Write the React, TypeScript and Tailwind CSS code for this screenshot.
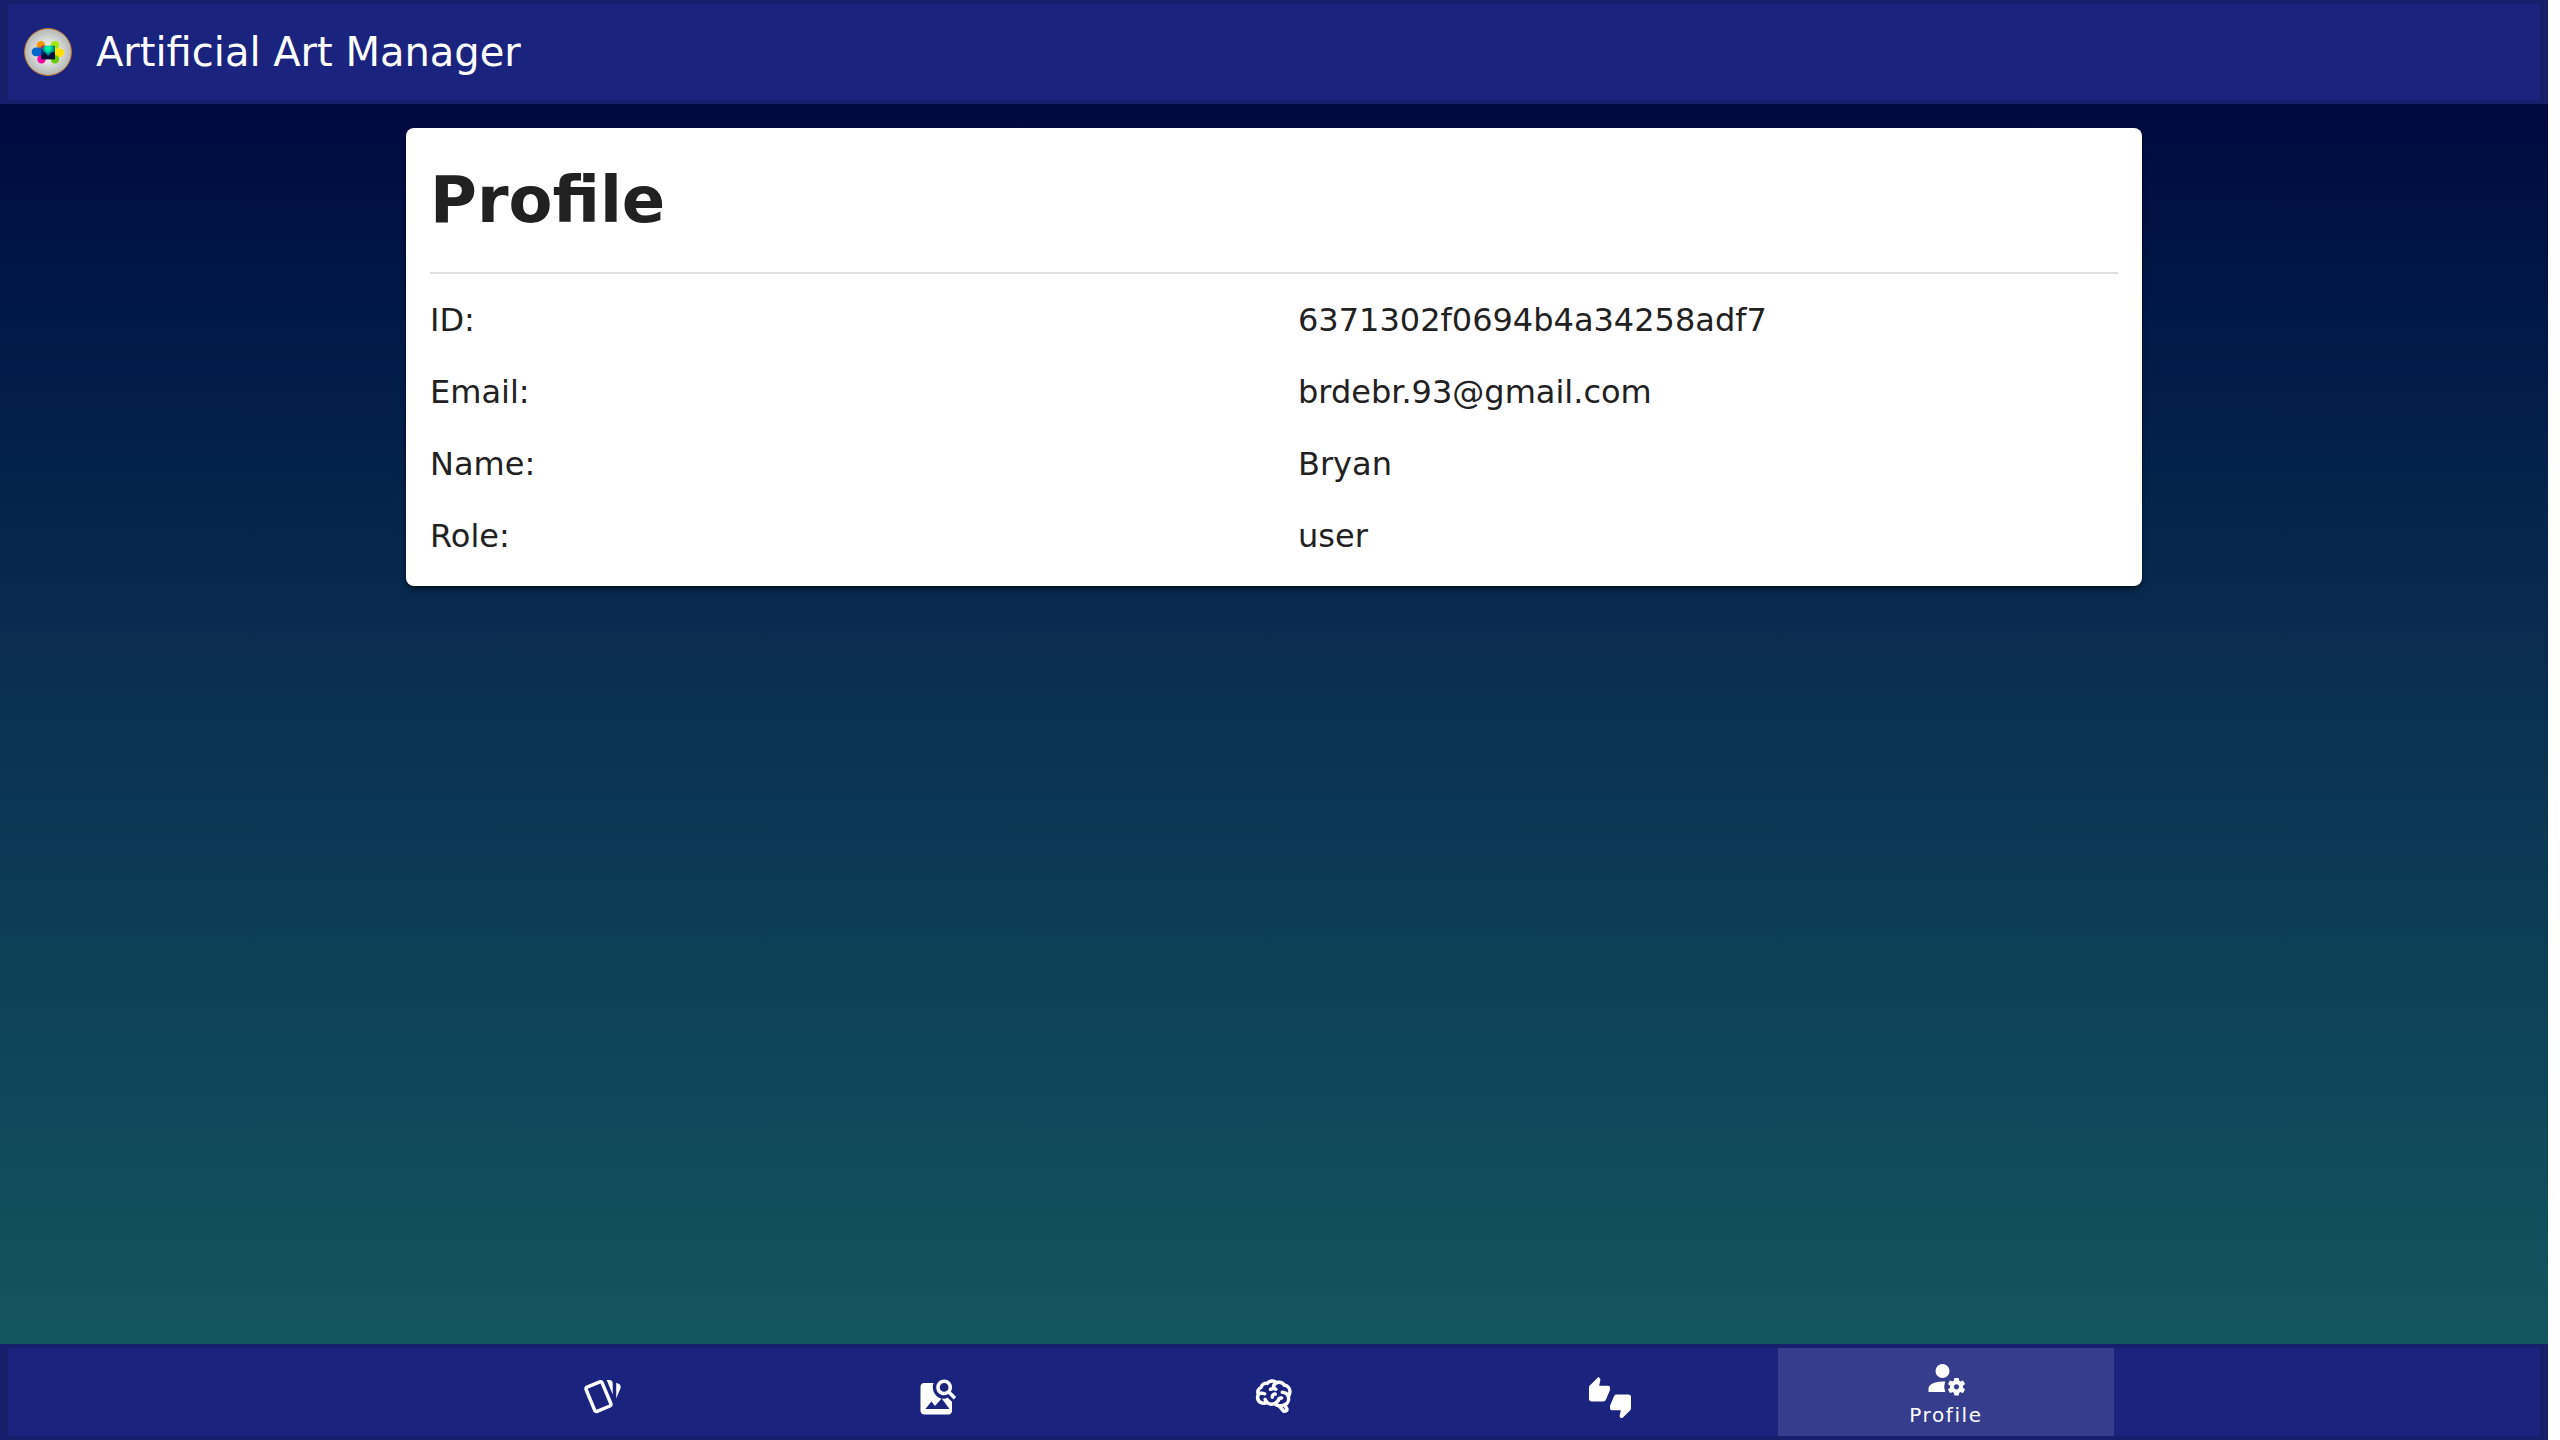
type NavItem = { label: string; path: string; active?: boolean };

const NAV_ITEMS: NavItem[] = [
  {
    label: "Cards",
    path: "M11.19,2.25C10.93,2.25 10.67,2.31 10.42,2.4L3.06,5.45C2.04,5.87 1.55,7.04 1.97,8.05L6.93,20C7.24,20.77 7.97,21.23 8.74,21.25C9,21.25 9.27,21.22 9.53,21.1L16.9,18.05C17.65,17.74 18.11,17 18.13,16.26C18.14,16 18.09,15.71 18,15.45L13,3.5C12.71,2.73 11.97,2.26 11.19,2.25M14.67,2.25L18.12,10.6V4.25A2,2 0 0,0 16.12,2.25M20.13,3.79V12.82L22.56,6.96C22.97,5.94 22.5,4.78 21.47,4.36M11.19,4.22L16.17,16.24L8.78,19.3L3.8,7.29",
  },
  {
    label: "Search images",
    path: "M15.5,9C16.2,9 16.79,8.76 17.27,8.27C17.76,7.79 18,7.2 18,6.5C18,5.83 17.76,5.23 17.27,4.73C16.79,4.23 16.2,4 15.5,4C14.83,4 14.23,4.23 13.73,4.73C13.23,5.23 13,5.83 13,6.5C13,7.2 13.23,7.79 13.73,8.27C14.23,8.76 14.83,9 15.5,9M19.31,8.91L22.41,12L21,13.41L17.86,10.31C17.08,10.78 16.28,11 15.47,11C14.22,11 13.16,10.58 12.3,9.7C11.45,8.83 11,7.77 11,6.5C11,5.27 11.45,4.2 12.33,3.33C13.2,2.45 14.27,2 15.5,2C16.77,2 17.83,2.45 18.7,3.33C19.58,4.2 20,5.27 20,6.5C20,7.33 19.78,8.13 19.31,8.91M16.5,18H5.5L8.25,14.5L10.22,17.1L14.1,12.8L18.6,18.8H4.7L5.5,18H16.5M17.4,12.3L20,14.7V20C20,20.55 19.81,21 19.41,21.4C19,21.79 18.53,22 18,22H4C3.45,22 3,21.79 2.6,21.4C2.21,21 2,20.55 2,20V6C2,5.47 2.21,5 2.6,4.59C3,4.19 3.45,4 4,4H9.5C9.2,4.64 9.03,5.31 9,6C9,8.2 9.64,9.77 10.9,11.1C12.1,12.4 13.66,13 15.5,13C16.2,13 16.8,12.7 17.4,12.3Z",
  },
  {
    label: "Brain",
    path: "M21.33,12.91C21.42,14.46 20.71,15.95 19.44,16.86L20.21,18.35C20.44,18.8 20.47,19.33 20.27,19.8C20.08,20.27 19.69,20.64 19.21,20.8L18.42,21.05C18.25,21.11 18.06,21.14 17.88,21.14C17.37,21.14 16.89,20.91 16.56,20.5L14.44,18C13.55,17.85 12.71,17.47 12,16.9C11.5,17.05 11,17.13 10.5,17.13C9.62,17.13 8.74,16.86 8,16.34C7.47,16.5 6.93,16.57 6.38,16.56C5.59,16.57 4.81,16.41 4.08,16.11C2.65,15.47 1.7,14.07 1.65,12.5C1.57,11.78 1.69,11.05 2,10.39C1.71,9.64 1.68,8.82 1.93,8.06C2.3,7.11 3,6.32 3.87,5.82C4.45,4.13 6.08,3 7.87,3.12C9.47,1.62 11.92,1.46 13.7,2.75C14.12,2.64 14.56,2.58 15,2.58C16.36,2.55 17.65,3.15 18.5,4.22C20.54,4.75 22,6.57 22.08,8.69C22.13,9.8 21.83,10.89 21.22,11.82C21.29,12.18 21.33,12.54 21.33,12.91M16.33,11.5C16.9,11.57 17.35,12 17.35,12.57A1,1 0 0,1 16.35,13.57H15.72C15.4,14.47 14.84,15.26 14.1,15.86C14.35,15.95 14.61,16 14.87,16.07C20,16 19.4,12.87 19.4,12.82C19.34,11.39 18.14,10.27 16.71,10.33A1,1 0 0,1 15.71,9.33A1,1 0 0,1 16.71,8.33C17.94,8.36 19.12,8.82 20.04,9.63C20.09,9.34 20.12,9.04 20.12,8.74C20.06,7.5 19.5,6.42 17.25,6.21C16,3.25 12.85,4.89 12.85,5.81V5.81C12.82,6.04 13.06,6.53 13.1,6.56A1,1 0 0,1 14.1,7.56C14.1,8.11 13.65,8.56 13.1,8.56V8.56C12.57,8.54 12.07,8.34 11.67,8C11.19,8.31 10.64,8.5 10.07,8.56V8.56C9.5,8.61 9.03,8.21 9,7.66C8.92,7.1 9.33,6.61 9.88,6.56C10.04,6.54 10.82,6.42 10.82,5.79V5.79C10.82,5.13 11.07,4.5 11.5,4C10.58,3.75 9.59,4.08 8.59,5.29C6.75,5 6,5.25 5.45,7.2C4.5,7.67 4,8 3.78,9C4.86,8.78 5.97,8.87 7,9.25C7.5,9.44 7.78,10 7.59,10.54C7.4,11.06 6.82,11.32 6.3,11.13C5.57,10.81 4.75,10.79 4,11.07C3.68,11.34 3.68,11.9 3.68,12.34C3.68,13.08 4.05,13.77 4.68,14.17C5.21,14.44 5.8,14.58 6.39,14.57C6.24,14.31 6.11,14.04 6,13.76C5.81,13.22 6.1,12.63 6.64,12.44C7.18,12.25 7.77,12.54 7.96,13.08C8.36,14.22 9.38,15 10.58,15.13C11.95,15.06 13.17,14.25 13.77,13C14,11.62 15.11,11.5 16.33,11.5M18.33,18.97L17.71,17.67L17,17.83L18,19.08L18.33,18.97M13.68,10.36C13.7,9.83 13.3,9.38 12.77,9.33C12.06,9.29 11.37,9.53 10.84,10C10.27,10.58 9.97,11.38 10,12.19A1,1 0 0,0 11,13.19C11.57,13.19 12,12.74 12,12.19C12,11.92 12.07,11.65 12.23,11.43C12.35,11.33 12.5,11.28 12.66,11.28C13.21,11.31 13.68,10.9 13.68,10.36Z",
  },
  {
    label: "Votes",
    path: "M22.5,10.5H15.75C15.13,10.5 14.6,10.88 14.37,11.41L12.11,16.7C12.04,16.87 12,17.06 12,17.25V18.5A1,1 0 0,0 13,19.5H18.18L17.5,22.68V22.92C17.5,23.23 17.63,23.5 17.83,23.72L18.62,24.5L23.56,19.56C23.83,19.29 24,18.91 24,18.5V12A1.5,1.5 0 0,0 22.5,10.5M12,6.5A1,1 0 0,0 11,5.5H5.82L6.5,2.32V2.09C6.5,1.78 6.37,1.5 6.17,1.29L5.38,0.5L0.44,5.44C0.17,5.71 0,6.09 0,6.5V13A1.5,1.5 0 0,0 1.5,14.5H8.25C8.87,14.5 9.4,14.12 9.63,13.59L11.89,8.3C11.96,8.13 12,7.94 12,7.75V6.5Z",
  },
  {
    label: "Profile",
    active: true,
    path: "M10 4A4 4 0 0 0 6 8A4 4 0 0 0 10 12A4 4 0 0 0 14 8A4 4 0 0 0 10 4M17 12C16.87 12 16.76 12.09 16.74 12.21L16.5 13.47C16.21 13.6 15.96 13.76 15.72 13.93L14.5 13.44C14.4 13.44 14.25 13.44 14.19 13.56L13.19 15.34C13.13 15.45 13.13 15.56 13.24 15.64L14.31 16.45C14.28 16.65 14.25 16.82 14.25 17C14.25 17.18 14.28 17.35 14.31 17.55L13.24 18.36C13.13 18.44 13.12 18.57 13.19 18.68L14.19 20.44C14.25 20.56 14.38 20.56 14.5 20.56L15.72 20.07C15.97 20.25 16.23 20.4 16.5 20.53L16.76 21.79C16.78 21.91 16.87 22 17 22H19C19.11 22 19.22 21.91 19.24 21.79L19.5 20.53C19.77 20.4 20.03 20.25 20.28 20.07L21.5 20.56C21.62 20.56 21.75 20.56 21.81 20.44L22.81 18.68C22.88 18.57 22.87 18.44 22.76 18.36L21.69 17.55C21.72 17.35 21.75 17.18 21.75 17C21.75 16.82 21.72 16.65 21.69 16.45L22.76 15.64C22.87 15.56 22.87 15.45 22.81 15.34L21.81 13.56C21.75 13.44 21.6 13.44 21.5 13.44L20.28 13.93C20.04 13.76 19.79 13.6 19.5 13.47L19.26 12.21C19.24 12.09 19.13 12 19 12H17M10 14C5.58 14 2 15.79 2 18V20H11.68A7 7 0 0 1 11 17A7 7 0 0 1 11.64 14.09C11.11 14.03 10.56 14 10 14M18 15.5C18.83 15.5 19.5 16.17 19.5 17C19.5 17.83 18.83 18.5 18 18.5C17.17 18.5 16.5 17.83 16.5 17C16.5 16.17 17.17 15.5 18 15.5Z",
  },
];

const DETAILS = [
  { term: "ID:", value: "6371302f0694b4a34258adf7" },
  { term: "Email:", value: "brdebr.93@gmail.com" },
  { term: "Name:", value: "Bryan" },
  { term: "Role:", value: "user" },
];

function Logo() {
  return (
    <svg viewBox="0 0 48 48" className="size-12 shrink-0" aria-hidden="true">
      <defs>
        <radialGradient id="disc">
          <stop offset="0.4" stopColor="#e4e6e4" />
          <stop offset="1" stopColor="#b4b7b2" />
        </radialGradient>
        <radialGradient id="core" cx="0.5" cy="0.2" r="0.6">
          <stop offset="0.25" stopColor="#00f5a0" />
          <stop offset="0.6" stopColor="#009c98" />
          <stop offset="1" stopColor="#06485f" />
        </radialGradient>
      </defs>
      <circle cx="24" cy="24" r="23.4" fill="url(#disc)" stroke="#c87a2c" />
      <circle cx="17" cy="17.3" r="4.2" fill="#ff9500" />
      <circle cx="31" cy="17.3" r="4.2" fill="#9fea00" />
      <path d="M12 19.5H18V28.2H12A4.35 4.35 0 0 1 12 19.5Z" fill="#0066cc" />
      <path d="M30 20.5H36A4.2 4.2 0 0 1 36 28.9H30Z" fill="#ffe000" />
      <circle cx="17.5" cy="31.3" r="4.2" fill="#ff00a0" />
      <circle cx="31" cy="31.3" r="4.2" fill="#66cc00" />
      <rect x="17.3" y="17.7" width="13.7" height="13.5" fill="url(#core)" />
      <path d="M17.3 17.7H20.5L17.3 21.5Z" fill="#e0186a" />
      <path d="M17.3 24.5L20.5 24L24.2 28.2L27.8 24L31 24.5V31.2H17.3Z" fill="#090c35" />
      <path d="M17.3 21.5H19.5V27H17.3Z" fill="#062a80" />
    </svg>
  );
}

export default function App() {
  return (
    <div className="flex h-screen bg-white pr-3 font-['DejaVu_Sans',sans-serif]">
      <div className="flex min-w-0 flex-1 flex-col bg-linear-to-b from-[#000a40] from-8% via-[#0a2d50] via-45% to-[#155a60] to-98%">
        <header className="flex items-center gap-6 border-x-8 border-y-4 border-[#171f6b] bg-[#1a237e] px-4 py-5">
          <Logo />
          <span className="text-[40px] leading-14 text-white">Artificial Art Manager</span>
        </header>

        <main className="min-h-0 flex-1 overflow-hidden p-6">
          <section className="mx-auto max-w-[1736px] rounded-lg bg-white px-6 pt-6 pb-7 text-[#212121] shadow-md shadow-black/50">
            <h1 className="text-[64px] leading-24 font-bold">Profile</h1>
            <hr className="my-6 border-t-2 border-[#e0e0e0]" />
            <dl className="flex flex-col gap-7 text-[32px] leading-11">
              {DETAILS.map(({ term, value }) => (
                <div key={term} className="grid grid-cols-2 gap-12">
                  <dt>{term}</dt>
                  <dd>{value}</dd>
                </div>
              ))}
            </dl>
          </section>
        </main>

        <nav className="flex h-24 justify-center border-x-8 border-y-4 border-[#171f6b] bg-[#1a237e]">
          {NAV_ITEMS.map(({ label, path, active }) => (
            <button
              key={label}
              type="button"
              aria-label={label}
              aria-current={active ? "page" : undefined}
              className={
                active
                  ? "flex max-w-84 flex-1 flex-col items-center justify-center bg-[#353d8c] pt-1 text-white"
                  : "flex max-w-84 flex-1 flex-col items-center justify-center pt-2.5 text-white"
              }
            >
              <svg viewBox="0 0 24 24" className="size-[42px] shrink-0" fill="currentColor" fillRule="evenodd" aria-hidden="true">
                <path d={path} />
              </svg>
              {active && <span className="text-xl leading-8 tracking-[0.08em]">{label}</span>}
            </button>
          ))}
        </nav>
      </div>
    </div>
  );
}
